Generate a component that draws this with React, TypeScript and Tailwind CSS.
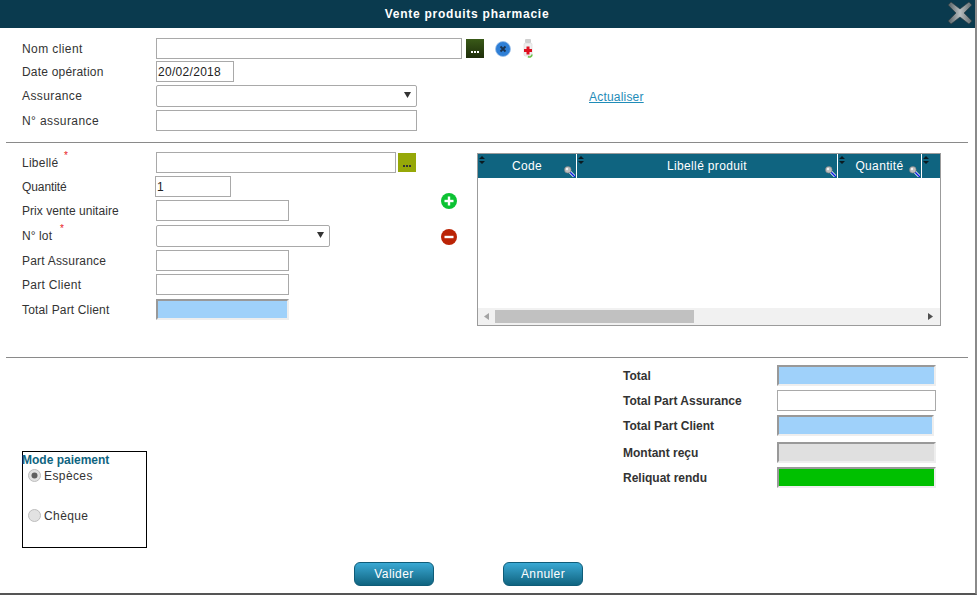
import React from "react";

function Label({ children, star, starClass, track = "tracking-[0.4px]" }: { children: React.ReactNode; star?: boolean; starClass?: string; track?: string }) {
  return (
    <div className={`w-[134px] shrink-0 relative text-[12px] text-[#333] ${track}`}>
      {children}
      {star && <span className={`absolute top-[-6px] text-[10px] text-[#e81c1c] ${starClass}`}>*</span>}
    </div>
  );
}

const box = "box-border h-[21px] border border-[#a9a9a9] bg-white";
const sunken = "box-border h-[21px] border-2 border-t-[#999] border-l-[#999] border-r-[#eee] border-b-[#eee]";

function Arrow() {
  return <svg width="7" height="6" viewBox="0 0 7 6" className="absolute right-[5px] top-[6px]"><path d="M0 0h7L3.5 6z" fill="#333" /></svg>;
}

function Select({ w }: { w: string }) {
  return <div className={`relative box-border h-[22px] border border-[#a9a9a9] rounded-[2px] bg-white ${w}`}><Arrow /></div>;
}

function Sort() {
  return (
    <svg width="6" height="8" viewBox="0 0 6 8" className="absolute left-[1px] top-[2px]">
      <path d="M3 0l3 3H0zM3 8L0 5h6z" fill="#0b1a20" />
    </svg>
  );
}

function Lens() {
  return (
    <svg width="11" height="11" viewBox="0 0 11 11" className="absolute right-[1px] top-[12px]">
      <path d="M5.5 5.5L11 11" stroke="#fff" strokeWidth="3" />
      <path d="M5.5 5.5L11 11" stroke="#0a1ce0" strokeWidth="1.5" />
      <circle cx="3.8" cy="3.8" r="3.3" fill="#bdbdbd" stroke="#808080" strokeWidth="0.6" />
      <circle cx="3" cy="3" r="1.2" fill="#f2f2f2" />
    </svg>
  );
}

function Th({ w, label, lens }: { w: string; label?: string; lens?: boolean }) {
  return (
    <div className={`relative h-full flex items-center justify-center text-[12px] tracking-[0.35px] text-white border-r border-white ${w}`}>
      <Sort />
      {label}
      {lens && <Lens />}
    </div>
  );
}

function Round({ color, minus }: { color: string; minus?: boolean }) {
  return (
    <svg width="16" height="16" viewBox="0 0 16 16">
      <circle cx="8" cy="8" r="8" fill={color} />
      <rect x="3.5" y="6.8" width="9" height="2.4" fill="#fff" />
      {!minus && <rect x="6.8" y="3.5" width="2.4" height="9" fill="#fff" />}
    </svg>
  );
}

function Radio({ checked }: { checked?: boolean }) {
  return (
    <svg width="13" height="13" viewBox="0 0 13 13">
      <circle cx="6.5" cy="6.5" r="6" fill="#e2e2e2" stroke="#bdbdbd" />
      {checked && <circle cx="6.5" cy="6.5" r="3" fill="#5f5f5f" />}
    </svg>
  );
}

function Btn({ children }: { children: React.ReactNode }) {
  return (
    <div className="w-[80px] h-[24px] box-border flex items-center justify-center rounded-[6px] border border-[#0f5c78] bg-gradient-to-b from-[#3aa9d4] to-[#0f6480] text-white text-[12px] tracking-[0.4px]">
      {children}
    </div>
  );
}

function Summary({ label, cls, mt }: { label: string; cls: string; mt: string }) {
  return (
    <div className={`flex items-center ${mt}`}>
      <div className="w-[154px] text-[12px] font-bold text-[#333]">{label}</div>
      <div className={cls} />
    </div>
  );
}

export default function App() {
  return (
    <div className="w-[977px] h-[595px] box-border overflow-hidden bg-white border-r-2 border-r-[#8a8a8a] border-b-2 border-b-[#555] flex flex-col" style={{ fontFamily: '"Liberation Sans", Arial, sans-serif' }}>
      <header className="relative h-[28px] shrink-0 bg-[#0a3a4e] flex items-center justify-center pr-[41px] text-white font-bold text-[12px] tracking-[0.75px]">
        Vente produits pharmacie
        <svg width="26" height="24" viewBox="0 0 24 24" className="absolute right-[2px] top-[1px]">
          <defs>
            <linearGradient id="xg" x1="0" y1="0" x2="1" y2="0">
              <stop offset="0" stopColor="#4f5b60" />
              <stop offset="0.5" stopColor="#b9bfc1" />
              <stop offset="1" stopColor="#5e686c" />
            </linearGradient>
          </defs>
          <path d="M3 1l9 7 9-7 3 3-8 8 8 8-3 3-9-7-9 7-3-3 8-8-8-8z" fill="url(#xg)" stroke="#2a3a40" strokeWidth="0.6" strokeLinejoin="round" />
        </svg>
      </header>

      <section className="pl-[22px] pt-[10px] h-[114px] box-border shrink-0">
        <div className="flex items-center h-[21px]">
          <Label>Nom client</Label>
          <div className={`${box} w-[306px]`} />
          <div className="ml-[4px] w-[18px] h-[19px] flex items-end justify-center pb-[5px] gap-[1px] bg-gradient-to-b from-[#3a5a18] to-[#1e2e0a]">
            <i className="w-[2px] h-[2px] bg-white" /><i className="w-[2px] h-[2px] bg-white" /><i className="w-[2px] h-[2px] bg-white" />
          </div>
          <svg width="16" height="16" viewBox="0 0 16 16" className="ml-[11px] mt-[1px]">
            <circle cx="8" cy="8" r="7.5" fill="#2f7fd6" stroke="#9cc0e8" strokeWidth="0.8" />
            <path d="M5.5 5.5l5 5M10.5 5.5l-5 5" stroke="#1b3350" strokeWidth="1.8" />
          </svg>
          <svg width="10" height="19" viewBox="0 0 10 19" className="ml-[12px]">
            <rect x="2" y="0" width="6" height="4" rx="1" fill="#cfcfcf" />
            <rect x="1" y="4" width="8" height="13" rx="1.5" fill="#efefef" stroke="#cfcfcf" strokeWidth="0.5" />
            <path d="M3.5 7.5h3v2.5H9v3H6.5v2.5h-3V13H1v-3h2.5z" fill="#e01020" />
            <path d="M5 17.5a2.5 2.5 0 0 0 4-2" stroke="#6cc04a" strokeWidth="1.6" fill="none" />
          </svg>
        </div>
        <div className="flex items-center h-[21px] mt-[2px]">
          <Label track="tracking-[0.2px]">Date opération</Label>
          <div className={`${box} w-[78px] flex items-center pl-[1px] text-[12px] tracking-[0.3px] text-[#222]`}>20/02/2018</div>
        </div>
        <div className="flex items-center h-[22px] mt-[3px]">
          <Label>Assurance</Label>
          <Select w="w-[261px]" />
          <a className="ml-[172px] mt-[2px] text-[12px] tracking-[0.2px] text-[#1f8cb8] underline">Actualiser</a>
        </div>
        <div className="flex items-center h-[21px] mt-[3px]">
          <Label>N° assurance</Label>
          <div className={`${box} w-[261px]`} />
        </div>
      </section>

      <hr className="mx-[6px] border-0 border-t border-[#8a8a8a] w-[962px] shrink-0" />

      <section className="flex h-[214px] shrink-0 box-border pt-[9px] pl-[22px]">
        <div className="w-[404px] shrink-0">
          <div className="flex items-center h-[21px]">
            <Label star starClass="left-[42px]" track="tracking-[0.25px]">Libellé</Label>
            <div className={`${box} w-[240px]`} />
            <div className="ml-[2px] w-[18px] h-[19px] flex items-end justify-center pb-[5px] gap-[1px] bg-[#96a808]">
              <i className="w-[2px] h-[2px] bg-[#333]" /><i className="w-[2px] h-[2px] bg-[#333]" /><i className="w-[2px] h-[2px] bg-[#333]" />
            </div>
          </div>
          <div className="flex items-center h-[21px] mt-[3px]">
            <Label track="tracking-[-0.1px]">Quantité</Label>
            <div className={`${box} w-[76px] -ml-[1px] flex items-center pl-[1px] text-[12px] text-[#222]`}>1</div>
          </div>
          <div className="flex items-center h-[21px] mt-[3px]">
            <Label track="tracking-[0.03px]">Prix vente unitaire</Label>
            <div className={`${box} w-[133px]`} />
          </div>
          <div className="flex items-center h-[22px] mt-[4px]">
            <Label star starClass="left-[38px]" track="tracking-[0.1px]">N° lot</Label>
            <Select w="w-[174px]" />
          </div>
          <div className="flex items-center h-[21px] mt-[3px]">
            <Label track="tracking-[0.2px]">Part Assurance</Label>
            <div className={`${box} w-[133px]`} />
          </div>
          <div className="flex items-center h-[21px] mt-[3px]">
            <Label track="tracking-[0.3px]">Part Client</Label>
            <div className={`${box} w-[133px]`} />
          </div>
          <div className="flex items-center h-[21px] mt-[4px]">
            <Label track="tracking-[0.16px]">Total Part Client</Label>
            <div className={`${sunken} w-[133px] bg-[#9fd1fa]`} />
          </div>
        </div>
        <div className="w-[51px] shrink-0 pl-[15px] pt-[41px] flex flex-col gap-[20px]">
          <Round color="#0cc233" />
          <Round color="#bb2406" minus />
        </div>
        <div className="w-[464px] h-[173px] mt-[1px] box-border border border-[#9b9b9b] flex flex-col">
          <div className="h-[24px] shrink-0 flex bg-[#0f6480]">
            <Th w="w-[99px]" label="Code" lens />
            <Th w="w-[261px]" label="Libellé produit" lens />
            <Th w="w-[84px]" label="Quantité" lens />
            <div className="relative flex-1"><Sort /></div>
          </div>
          <div className="flex-1" />
          <div className="relative h-[17px] bg-[#f1f1f1] flex items-center">
            <svg width="5" height="7" viewBox="0 0 5 7" className="ml-[6px]"><path d="M5 0v7L0 3.5z" fill="#a3a3a3" /></svg>
            <div className="ml-[6px] w-[199px] h-[13px] bg-[#c1c1c1]" />
            <svg width="5" height="7" viewBox="0 0 5 7" className="ml-auto mr-[7px]"><path d="M0 0v7l5-3.5z" fill="#505050" /></svg>
          </div>
        </div>
      </section>

      <hr className="mx-[6px] border-0 border-t border-[#8a8a8a] w-[962px] shrink-0" />

      <section className="flex justify-between pl-[22px] pr-[39px] shrink-0 h-[204px] box-border pt-[7px]">
        <div className="mt-[86px] w-[125px] h-[97px] box-border border border-black text-[12px]">
          <div className="font-bold text-[#0f6480] leading-[15px] mt-[1px] -ml-[1px]">Mode paiement</div>
          <div className="flex items-center gap-[3px] ml-[5px] h-[15px] text-[#333] tracking-[0.4px]"><Radio checked />Espèces</div>
          <div className="flex items-center gap-[3px] ml-[5px] h-[15px] mt-[25px] text-[#333] tracking-[0.4px]"><Radio />Chèque</div>
        </div>
        <div className="w-[313px]">
          <Summary label="Total" mt="" cls={`${sunken} w-[159px] bg-[#9fd1fa]`} />
          <Summary label="Total Part Assurance" mt="mt-[4px]" cls={`${box} w-[159px]`} />
          <Summary label="Total Part Client" mt="mt-[4px]" cls={`${sunken} w-[157px] bg-[#9fd1fa]`} />
          <Summary label="Montant reçu" mt="mt-[6px]" cls={`${sunken} w-[159px] bg-[#e0e0e0]`} />
          <Summary label="Reliquat rendu" mt="mt-[4px]" cls={`${sunken} w-[159px] bg-[#00c000]`} />
        </div>
      </section>

      <footer className="flex pl-[354px] gap-[69px]">
        <Btn>Valider</Btn>
        <Btn>Annuler</Btn>
      </footer>
    </div>
  );
}
